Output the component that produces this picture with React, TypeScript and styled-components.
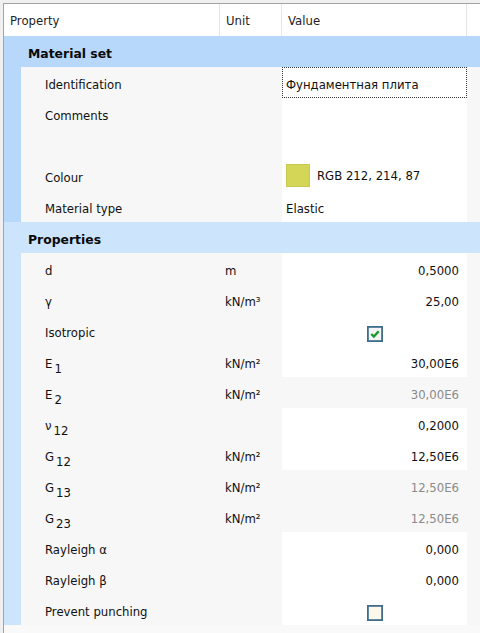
import type { ReactNode } from 'react';
import styled, { createGlobalStyle } from 'styled-components';

const GlobalStyle = createGlobalStyle`
  html, body {
    margin: 0;
    padding: 0;
    background: #f0f0f0;
  }
  body {
    font-family: "DejaVu Sans", "Noto Sans", sans-serif;
    font-size: 11.7px;
    color: #111;
  }
`;

const S = {
  Grid: styled.div`
    margin: 3px 0 0 3px;
    height: 630px;
    border-top: 1px solid #a3a3a3;
    border-left: 1px solid #a3a3a3;
    background: #f9f9f9;
    overflow: hidden;
    box-sizing: border-box;
  `,

  Header: styled.div`
    display: grid;
    grid-template-columns: 216px 62px 185px 1fr;
    height: 32px;
    background: #fff;
  `,

  HeaderCell: styled.div`
    display: flex;
    align-items: center;
    padding: 1px 0 0 6px;
    border-right: 1px solid #e6e6e6;
    color: #1e1e1e;
  `,

  HeaderFill: styled.div``,

  SectionHeader: styled.div<{ $active?: boolean }>`
    display: flex;
    align-items: center;
    height: 31px;
    padding: 4px 0 0 24px;
    box-sizing: border-box;
    font-weight: bold;
    font-size: 12.4px;
    color: #0a0a0a;
    background: ${(p) => (p.$active ? '#b7d7fb' : '#cde4fd')};
  `,

  Row: styled.div<{ $tall?: boolean }>`
    display: grid;
    grid-template-columns: 17px 198px 63px 185px 1fr;
    height: ${(p) => (p.$tall ? 62 : 31)}px;
    background: #f7f7f7;
  `,

  Band: styled.div<{ $active?: boolean }>`
    background: ${(p) => (p.$active ? '#b7d7fb' : '#cde4fd')};
  `,

  Label: styled.div`
    height: 31px;
    display: flex;
    align-items: center;
    padding: 5px 0 0 24px;
    box-sizing: border-box;
    white-space: nowrap;
  `,

  Sub: styled.span`
    margin-left: 2px;
    position: relative;
    top: 5px;
  `,

  Unit: styled.div`
    height: 31px;
    display: flex;
    align-items: center;
    padding: 5px 0 0 6px;
    box-sizing: border-box;
  `,

  Value: styled.div<{ $align: 'left' | 'right' | 'center'; $disabled?: boolean; $focused?: boolean }>`
    display: flex;
    align-items: ${(p) => (p.$align === 'center' ? 'center' : 'flex-start')};
    justify-content: ${(p) => ({ left: 'flex-start', right: 'flex-end', center: 'center' })[p.$align]};
    padding: ${(p) => (p.$align === 'center' ? '7px 0 0 0' : '10px 7px 0 3px')};
    box-sizing: border-box;
    background: ${(p) => (p.$disabled ? 'transparent' : '#fff')};
    color: ${(p) => (p.$disabled ? '#8a8a8a' : '#111')};
    border: 1px ${(p) => (p.$focused ? 'dotted #333' : 'solid transparent')};
    white-space: nowrap;
  `,

  ColourValue: styled.span`
    display: flex;
    align-items: center;
    gap: 7px;
    margin-top: -7px;
  `,

  Swatch: styled.span`
    width: 24px;
    height: 23px;
    background: rgb(212, 214, 87);
    box-shadow: inset 0 0 0 1px #c8ca50;
  `,

  Filler: styled.div``,
};

type Row = {
  label: ReactNode;
  unit?: string;
  value?: ReactNode;
  align?: 'left' | 'right' | 'center';
  disabled?: boolean;
  tall?: boolean;
  focused?: boolean;
};

const Sub = ({ base, index }: { base: string; index: string }) => (
  <span>
    {base}
    <S.Sub>{index}</S.Sub>
  </span>
);

const CheckBox = ({ checked }: { checked: boolean }) => (
  <svg width="16" height="16" viewBox="0 0 16 16">
    <rect x="0.9" y="0.9" width="14.2" height="14.2" fill={checked ? '#f4f4f4' : '#fdf8ec'} stroke="#3e6d8a" strokeWidth="1.8" />
    {checked && <path d="M4.3 8 L6.9 10.6 L11.7 5.3" fill="none" stroke="#16982f" strokeWidth="2.4" />}
  </svg>
);

const materialRows: Row[] = [
  { label: 'Identification', value: 'Фундаментная плита', align: 'left', focused: true },
  { label: 'Comments', value: '', align: 'left', tall: true },
  {
    label: 'Colour',
    value: (
      <S.ColourValue>
        <S.Swatch />
        RGB 212, 214, 87
      </S.ColourValue>
    ),
    align: 'left',
  },
  { label: 'Material type', value: 'Elastic', align: 'left' },
];

const propertyRows: Row[] = [
  { label: 'd', unit: 'm', value: '0,5000' },
  { label: 'γ', unit: 'kN/m³', value: '25,00' },
  { label: 'Isotropic', value: <CheckBox checked />, align: 'center' },
  { label: <Sub base="E" index="1" />, unit: 'kN/m²', value: '30,00E6' },
  { label: <Sub base="E" index="2" />, unit: 'kN/m²', value: '30,00E6', disabled: true },
  { label: <Sub base="ν" index="12" />, value: '0,2000' },
  { label: <Sub base="G" index="12" />, unit: 'kN/m²', value: '12,50E6' },
  { label: <Sub base="G" index="13" />, unit: 'kN/m²', value: '12,50E6', disabled: true },
  { label: <Sub base="G" index="23" />, unit: 'kN/m²', value: '12,50E6', disabled: true },
  { label: 'Rayleigh α', value: '0,000' },
  { label: 'Rayleigh β', value: '0,000' },
  { label: 'Prevent punching', value: <CheckBox checked={false} />, align: 'center' },
];

const Section = ({ title, rows, active }: { title: string; rows: Row[]; active?: boolean }) => (
  <>
    <S.SectionHeader $active={active}>{title}</S.SectionHeader>
    {rows.map((row, i) => (
      <S.Row key={i} $tall={row.tall}>
        <S.Band $active={active} />
        <S.Label>{row.label}</S.Label>
        <S.Unit>{row.unit}</S.Unit>
        <S.Value $align={row.align ?? 'right'} $disabled={row.disabled} $focused={row.focused}>
          {row.value}
        </S.Value>
        <S.Filler />
      </S.Row>
    ))}
  </>
);

export default function App() {
  return (
    <>
      <GlobalStyle />
      <S.Grid>
        <S.Header>
          <S.HeaderCell>Property</S.HeaderCell>
          <S.HeaderCell>Unit</S.HeaderCell>
          <S.HeaderCell>Value</S.HeaderCell>
          <S.HeaderFill />
        </S.Header>
        <Section title="Material set" rows={materialRows} active />
        <Section title="Properties" rows={propertyRows} />
      </S.Grid>
    </>
  );
}
